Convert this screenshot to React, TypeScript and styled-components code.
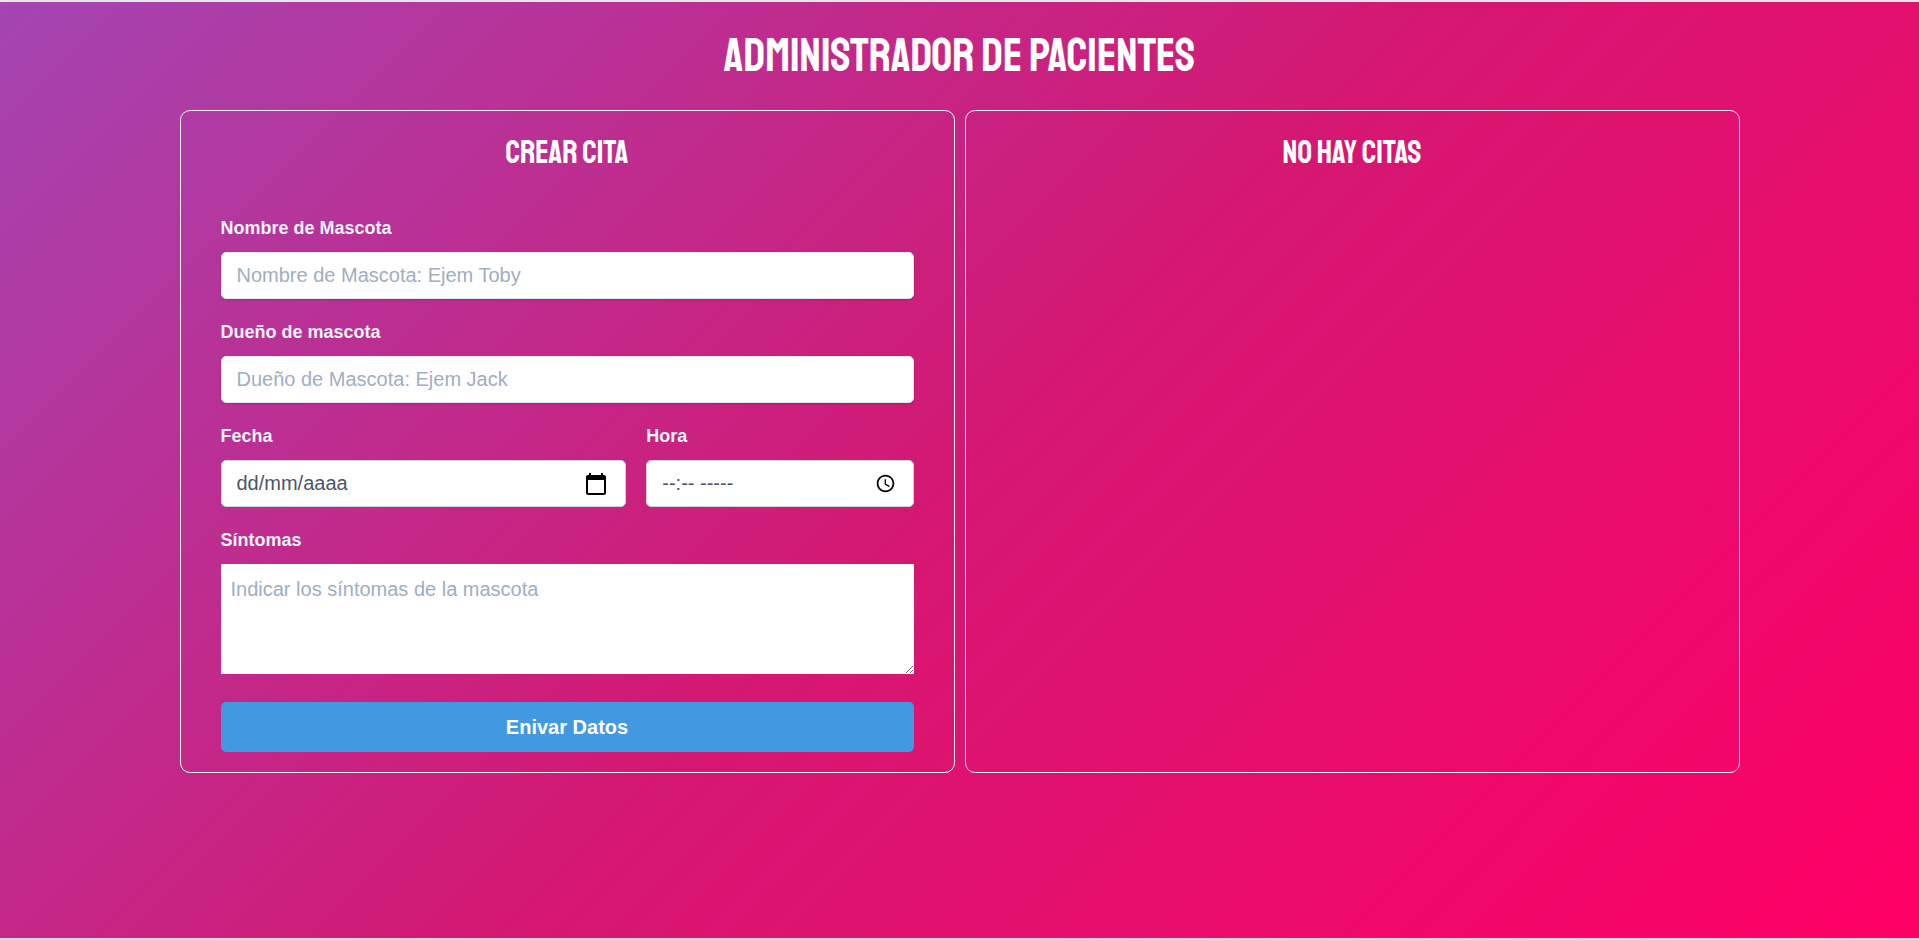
import React from "react";
import styled, { createGlobalStyle } from "styled-components";

const headingFont = `Staatliches, "Roboto Condensed", "Open Sans Condensed", Roboto, sans-serif`;

const GlobalStyle = createGlobalStyle`
  *, *::before, *::after { box-sizing: border-box; }
  body {
    margin: 0;
    font-family: "Liberation Sans", Arial, sans-serif;
    font-size: 20px;
    line-height: 30px;
  }
  input, textarea, button { font: inherit; margin: 0; }
`;

const Page = styled.div`
  min-height: 100vh;
  border-top: 2px solid #e6e6e8;
  border-bottom: 3px solid #d8d8d8;
  background: linear-gradient(135deg, #a445b2, #d41872, #ff0066);
  background-clip: padding-box;
`;

const Title = styled.h1`
  margin: 0;
  padding: 24px 20px;
  color: #fff;
  font-family: ${headingFont};
  font-size: 46px;
  line-height: 60px;
  font-weight: 400;
  text-align: center;
  text-transform: uppercase;
`;

const Columns = styled.main`
  display: grid;
  grid-template-columns: repeat(auto-fit, minmax(min(100%, 440px), 1fr));
  gap: 10px;
  max-width: 1600px;
  margin: 0 auto;
  padding: 0 20px 20px;
`;

const Panel = styled.section`
  padding: 20px 40px;
  border: 1px solid #edf2f7;
  border-radius: 10px;
`;

const PanelTitle = styled.h2`
  margin: 0 0 40px;
  color: #fff;
  font-family: ${headingFont};
  font-size: 32px;
  line-height: 44px;
  font-weight: 400;
  text-align: center;
  text-transform: uppercase;
`;

const Field = styled.div`
  min-width: 0;
  margin-bottom: 20px;
`;

const FieldRow = styled.div`
  display: grid;
  grid-template-columns: calc(60% - 10px) 1fr;
  gap: 20px;
`;

const Label = styled.label`
  display: block;
  margin-bottom: 10px;
  color: #edf2f7;
  font-size: 18px;
  line-height: 27px;
  font-weight: 700;
`;

const TextInput = styled.input`
  display: block;
  width: 100%;
  padding: 10px 15px;
  border: 1px solid #e2e8f0;
  border-radius: 5px;
  background: #fff;
  color: #4a5568;
  line-height: 25px;
  box-shadow: 0 1px 3px rgba(0, 0, 0, 0.1), 0 1px 2px rgba(0, 0, 0, 0.06);
  &::placeholder { color: #a0aec0; opacity: 1; }
`;

const PickerInput = styled(TextInput)`
  padding-right: 50px;
  border-color: #cbd5e0;
  box-shadow: none;
  &::placeholder { color: #4a5568; }
`;

const PickerBox = styled.div`
  position: relative;
`;

const PickerButton = styled.button`
  position: absolute;
  top: 0;
  bottom: 0;
  right: 18px;
  display: flex;
  align-items: center;
  padding: 0;
  border: 0;
  background: none;
  color: #000;
`;

const TextArea = styled.textarea`
  display: block;
  width: 100%;
  margin-bottom: 28px;
  padding: 10px;
  border: 0;
  background: #fff;
  color: #4a5568;
  resize: vertical;
  &::placeholder { color: #a0aec0; opacity: 1; }
`;

const SubmitButton = styled.button`
  display: block;
  width: 100%;
  padding: 10px 20px;
  border: 0;
  border-radius: 5px;
  background: #4299e1;
  color: #fff;
  font-weight: 700;
  cursor: pointer;
`;

const CalendarIcon = () => (
  <svg width="24" height="24" viewBox="0 0 24 24" fill="currentColor" aria-hidden="true">
    <path d="M20 3h-1V1h-2v2H7V1H5v2H4c-1.100 0-2 .9-2 2v16c0 1.100.9 2 2 2h16c1.100 0 2-.9 2-2V5c0-1.100-.9-2-2-2zm0 18H4V8h16v13z" />
  </svg>
);

const ClockIcon = () => (
  <svg width="21" height="21" viewBox="0 0 24 24" fill="currentColor" aria-hidden="true">
    <path d="M12 2C6.500 2 2 6.500 2 12s4.500 10 10 10 10-4.500 10-10S17.500 2 12 2zm0 18c-4.420 0-8-3.580-8-8s3.580-8 8-8 8 3.580 8 8-3.580 8-8 8zm.5-13H11v6l5.250 3.150.75-1.230-4.500-2.670z" />
  </svg>
);

export default function App() {
  return (
    <Page>
      <GlobalStyle />
      <Title>Administrador de Pacientes</Title>
      <Columns>
        <Panel>
          <PanelTitle>Crear cita</PanelTitle>
          <form onSubmit={(e) => e.preventDefault()}>
            <Field>
              <Label htmlFor="mascota">Nombre de Mascota</Label>
              <TextInput id="mascota" type="text" placeholder="Nombre de Mascota: Ejem Toby" />
            </Field>
            <Field>
              <Label htmlFor="propietario">Dueño de mascota</Label>
              <TextInput id="propietario" type="text" placeholder="Dueño de Mascota: Ejem Jack" />
            </Field>
            <FieldRow>
              <Field>
                <Label htmlFor="fecha">Fecha</Label>
                <PickerBox>
                  <PickerInput id="fecha" type="text" placeholder="dd/mm/aaaa" />
                  <PickerButton type="button" aria-label="Elegir fecha"><CalendarIcon /></PickerButton>
                </PickerBox>
              </Field>
              <Field>
                <Label htmlFor="hora">Hora</Label>
                <PickerBox>
                  <PickerInput id="hora" type="text" placeholder="--:-- -----" />
                  <PickerButton type="button" aria-label="Elegir hora"><ClockIcon /></PickerButton>
                </PickerBox>
              </Field>
            </FieldRow>
            <Label htmlFor="sintomas">Síntomas</Label>
            <TextArea id="sintomas" rows={3} placeholder="Indicar los síntomas de la mascota" />
            <SubmitButton type="submit">Enivar Datos</SubmitButton>
          </form>
        </Panel>
        <Panel>
          <PanelTitle>No hay citas</PanelTitle>
        </Panel>
      </Columns>
    </Page>
  );
}
